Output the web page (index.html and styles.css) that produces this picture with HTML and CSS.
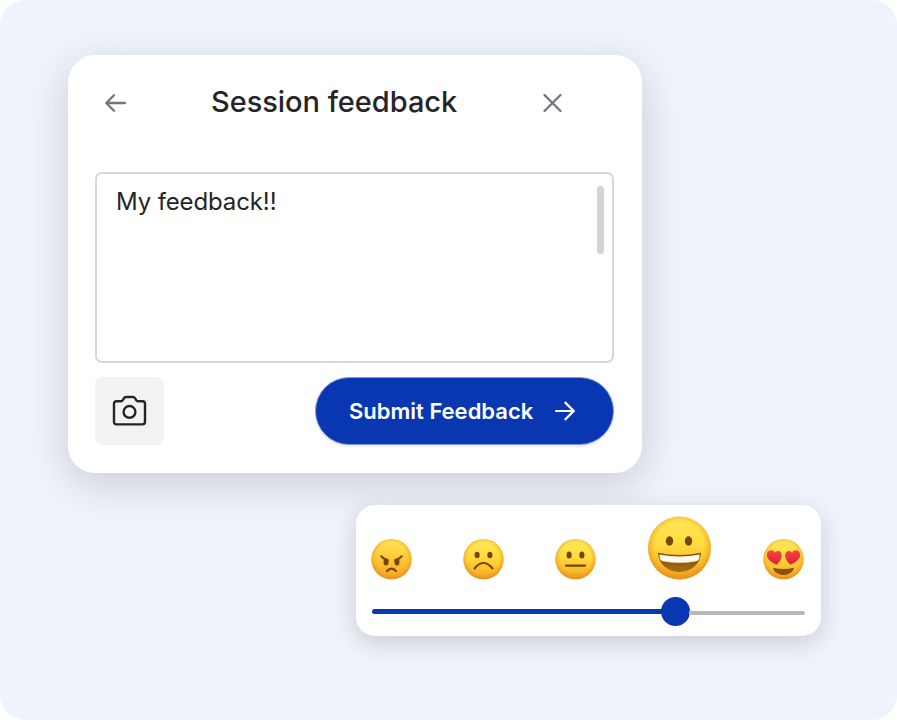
FILE: index.html
```
<!DOCTYPE html>
<html lang="en">
<head>
<meta charset="utf-8">
<title>Session feedback</title>
<link rel="stylesheet" href="styles.css">
</head>
<body>
<main class="stage">
  <section class="card">
    <header class="card-header">
      <svg class="back" width="24" height="22" viewBox="0 0 24 22"><path d="M22 11H3.500M11 3.300 3.300 11l7.700 7.700"/></svg>
      <h1 class="title">Session feedback</h1>
      <svg class="close" width="22" height="22" viewBox="0 0 22 22"><path d="m2.500 3 16 16M18.500 3l-16 16"/></svg>
    </header>
    <div class="field">
      <p class="field-text">My feedback!!</p>
      <span class="scrollbar"></span>
    </div>
    <div class="actions">
      <div class="camera">
        <svg width="36" height="34" viewBox="0 0 36 34"><path d="M4.600 7.200h4.500q1 0 1.500-.8l1.500-2.400q.6-1 1.700-1h7.400q1.100 0 1.700 1l1.500 2.400q.5.8 1.500.8h4.500q2.600 0 2.600 2.600v18q0 2.600-2.600 2.600H4.600Q2 30.400 2 27.800v-18q0-2.600 2.600-2.600Z"/><circle cx="17.500" cy="17.900" r="5.900"/></svg>
      </div>
      <div class="submit">
        <span class="submit-label">Submit Feedback</span>
        <svg width="24" height="22" viewBox="0 0 24 22"><path d="M2.200 11h18M11.800 2.100 20.700 11l-8.900 8.900"/></svg>
      </div>
    </div>
  </section>

  <section class="rating">
    <svg class="defs" width="0" height="0">
      <defs>
        <linearGradient id="skin" x1="0" y1="0" x2="0" y2="1">
          <stop offset="0" stop-color="#ffe95c"/><stop offset=".45" stop-color="#ffdb3c"/><stop offset=".75" stop-color="#fdbe2b"/><stop offset="1" stop-color="#f19e1f"/>
        </linearGradient>
        <radialGradient id="edge" cx=".5" cy=".47" r=".53">
          <stop offset=".72" stop-color="#f0a020" stop-opacity="0"/><stop offset="1" stop-color="#e0851c" stop-opacity=".7"/>
        </radialGradient>
        <linearGradient id="angry" x1="0" y1="0" x2="0" y2="1">
          <stop offset="0" stop-color="#ffe55a"/><stop offset=".5" stop-color="#ffc835"/><stop offset="1" stop-color="#f8a023"/>
        </linearGradient>
        <linearGradient id="heart" x1="0" y1="0" x2="0" y2="1">
          <stop offset="0" stop-color="#f84342"/><stop offset="1" stop-color="#db2333"/>
        </linearGradient>
        <linearGradient id="mouth" x1="0" y1="0" x2="0" y2="1">
          <stop offset="0" stop-color="#7c480b"/><stop offset="1" stop-color="#a9700f"/>
        </linearGradient>
      </defs>
    </svg>
    <div class="faces">
      <svg class="face" viewBox="0 0 64 64">
        <circle cx="32" cy="31.500" r="31.500" fill="url(#angry)"/><circle cx="32" cy="31.500" r="31.500" fill="url(#edge)"/>
        <g fill="#764608"><ellipse cx="23.500" cy="36" rx="4" ry="5.500"/><ellipse cx="40.500" cy="36" rx="4" ry="5.500"/></g>
        <path class="line" d="M16 27q4 4.500 10 6M48 27q-4 4.500-10 6M25 50q7-7.500 14 0"/>
      </svg>
      <svg class="face" viewBox="0 0 64 64">
        <circle cx="32" cy="31.500" r="31.500" fill="url(#skin)"/><circle cx="32" cy="31.500" r="31.500" fill="url(#edge)"/>
        <g fill="#764608"><ellipse cx="22" cy="25" rx="4" ry="5"/><ellipse cx="42" cy="25" rx="4" ry="5"/></g>
        <path class="line" d="M18 46q14-17 28 0"/>
      </svg>
      <svg class="face" viewBox="0 0 64 64">
        <circle cx="32" cy="31.500" r="31.500" fill="url(#skin)"/><circle cx="32" cy="31.500" r="31.500" fill="url(#edge)"/>
        <g fill="#764608"><ellipse cx="22" cy="25" rx="4" ry="5.500"/><ellipse cx="42" cy="25" rx="4" ry="5.500"/></g>
        <path class="line" d="M17 41.500h30"/>
      </svg>
      <svg class="face selected" viewBox="0 0 64 64">
        <circle cx="32" cy="32" r="31.500" fill="url(#skin)"/><circle cx="32" cy="32" r="31.500" fill="url(#edge)"/>
        <g fill="#764608"><ellipse cx="22" cy="25" rx="3.700" ry="4.700"/><ellipse cx="41" cy="25" rx="3.700" ry="4.700"/></g>
        <path d="M10.500 36.800q21 4.500 43 0C53 48 44 56 32 56S11 48 10.500 36.800Z" fill="url(#mouth)"/>
        <path d="M12 38.500q20 4 40 0 .6 6-3.400 6.800-16.600 3-33.200 0-4-.8-3.400-6.800Z" fill="#fff9e9"/>
      </svg>
      <svg class="face" viewBox="0 0 64 64">
        <circle cx="32" cy="31.500" r="31.500" fill="url(#skin)"/><circle cx="32" cy="31.500" r="31.500" fill="url(#edge)"/>
        <path d="M15.500 45q16.500 4 33 0c-1 6.500-8 11-16.500 11s-15.500-4.500-16.500-11Z" fill="#875108"/>
        <path d="M21 40C13 36 6 32 6 24.500c0-7 9.500-9.500 12.500-3 6-6.500 12-1 10.500 6.500-1 5-4 8.500-8 12Z" fill="url(#heart)"/>
        <path d="M43 40c8-4 15-8 15-15.500 0-7-9.500-9.500-12.500-3-6-6.500-12-1-10.500 6.500 1 5 4 8.500 8 12Z" fill="url(#heart)"/>
      </svg>
    </div>
    <div class="slider">
      <span class="filled"></span><span class="thumb"></span><span class="rest"></span>
    </div>
  </section>
</main>
</body>
</html>
```
FILE: styles.css
```
* { box-sizing: border-box; }
body {
  margin: 0;
  background: #fff;
  font-family: Inter, "Liberation Sans", sans-serif;
  color: #252527;
}
svg { display: block; flex: none; }
.stage {
  height: 720px;
  padding: 55px 0 0 68px;
  background: #eff3fb;
  border-radius: 25px;
  overflow: hidden;
}
.card {
  width: 574px;
  height: 418px;
  padding: 0 28px 0 27px;
  background: #fff;
  border-radius: 27px;
  box-shadow: 0 11px 42px rgba(32, 34, 42, .18);
}
.card-header {
  display: flex;
  align-items: center;
  height: 117px;
  padding: 0 50px 22px 8px;
}
.title {
  flex: 1;
  margin: -2px 0 0 84px;
  font-size: 29px;
  line-height: 36px;
  font-weight: 500;
  letter-spacing: -.04px;
  white-space: nowrap;
}
.back, .close {
  fill: none;
  stroke: #74747d;
  stroke-width: 2.3;
  stroke-linecap: round;
  stroke-linejoin: round;
}
.field {
  display: flex;
  justify-content: space-between;
  height: 191px;
  padding: 12px 8px 0 19px;
  border: 2px solid #d7d7da;
  border-radius: 7px;
}
.field-text {
  margin: 0;
  font-size: 24px;
  line-height: 32px;
  letter-spacing: -.12px;
}
.scrollbar {
  width: 7px;
  height: 68px;
  border-radius: 4px;
  background: #d3d2d7;
}
.actions {
  display: flex;
  justify-content: space-between;
  margin-top: 14px;
}
.camera {
  display: flex;
  align-items: center;
  justify-content: center;
  width: 69px;
  height: 68px;
  border-radius: 7px;
  background: #f3f3f3;
}
.camera svg {
  fill: none;
  stroke: #252527;
  stroke-width: 2.4;
}
.submit {
  display: flex;
  align-items: center;
  gap: 20px;
  width: 299px;
  height: 68px;
  padding-left: 33px;
  border: 1px solid #7d9be9;
  border-radius: 34px;
  background: #0937b2;
  box-shadow: 0 2px 3px rgba(20, 30, 60, .08);
  color: #fff;
}
.submit-label {
  font-size: 22px;
  font-weight: 600;
  white-space: nowrap;
}
.submit svg {
  fill: none;
  stroke: #fff;
  stroke-width: 2.2;
}
.rating {
  width: 465px;
  height: 131px;
  margin: 32px 0 0 288px;
  padding: 11px 17px 0 15px;
  background: #fff;
  border-radius: 19px;
  box-shadow: 0 7px 24px rgba(32, 34, 42, .18);
}
.faces {
  display: flex;
  justify-content: space-between;
  align-items: flex-end;
  height: 64px;
}
.defs { position: absolute; }
.face { width: 41px; height: 41px; }
.selected { width: 65px; height: 64px; }
.line {
  fill: none;
  stroke: #764608;
  stroke-width: 3.4;
  stroke-linecap: round;
}
.slider {
  display: flex;
  align-items: center;
  height: 29px;
  margin: 17px -1px 0 1px;
}
.filled {
  width: 290px;
  height: 5px;
  border-radius: 3px 0 0 3px;
  background: #0937b2;
}
.thumb {
  width: 29px;
  height: 29px;
  margin-left: -1px;
  border-radius: 50%;
  background: #0937b2;
}
.rest {
  flex: 1;
  height: 4px;
  margin: 2px 0 0 -1px;
  border-radius: 0 2px 2px 0;
  background: #b8b8b8;
}
```
